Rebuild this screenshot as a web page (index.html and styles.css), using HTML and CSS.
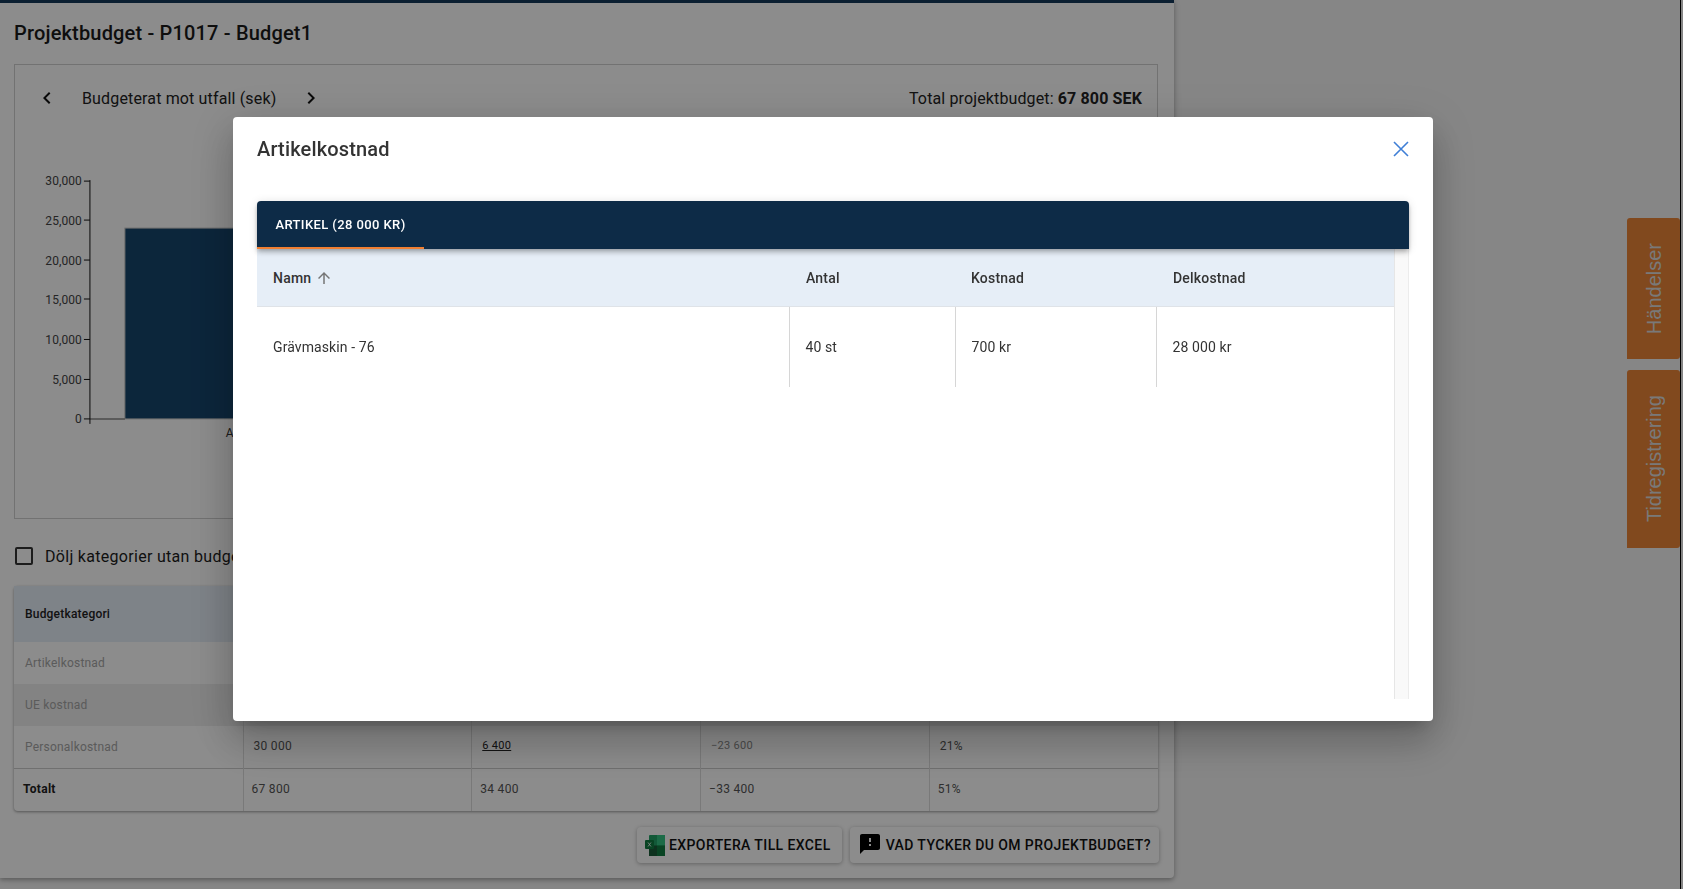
FILE: index.html
```html
<!DOCTYPE html>
<html lang="sv">
<head>
<meta charset="utf-8">
<title>Projektbudget</title>
<link rel="stylesheet" href="styles.css">
</head>
<body>
<div class="page">
  <main class="card">
    <h1 class="page-title">Projektbudget - P1017 - Budget1</h1>
    <section class="chart-box">
      <div class="chart-head">
        <div class="chart-nav">
          <svg class="chev" viewBox="0 0 24 24"><path d="M15.41 7.41 14 6l-6 6 6 6 1.41-1.41L10.83 12z"/></svg>
          <span class="chart-name">Budgeterat mot utfall (sek)</span>
          <svg class="chev chev-next" viewBox="0 0 24 24"><path d="M10 6 8.59 7.41 13.17 12l-4.58 4.59L10 18l6-6z"/></svg>
        </div>
        <div class="chart-total">Total projektbudget: <b>67 800 SEK</b></div>
      </div>
      <svg class="chart" viewBox="0 0 1143 403">
        <rect class="bar" x="110" y="113" width="300" height="191"/>
        <line class="base" x1="75" y1="304" x2="110" y2="304"/>
        <path class="axis" d="M75 65V309M69 66H75M69 105H75M69 145H75M69 184H75M69 224.500H75M69 264.500H75M69 304H75"/>
        <g class="ticks">
          <text x="67" y="70">30,000</text>
          <text x="67" y="110">25,000</text>
          <text x="67" y="149.500">20,000</text>
          <text x="67" y="189">15,000</text>
          <text x="67" y="229">10,000</text>
          <text x="67" y="269">5,000</text>
          <text x="67" y="308.500">0</text>
        </g>
        <text class="xlabel" x="211" y="322">A</text>
      </svg>
    </section>
    <label class="hide-row">
      <span class="checkbox"></span>
      <span class="hide-text">Dölj kategorier utan budget</span>
    </label>
    <table class="budget">
      <thead>
        <tr><th class="first">Budgetkategori</th><th></th><th></th><th></th><th></th></tr>
      </thead>
      <tbody>
        <tr class="cat"><td class="muted">Artikelkostnad</td><td></td><td></td><td></td><td></td></tr>
        <tr class="cat alt"><td class="muted">UE kostnad</td><td></td><td></td><td></td><td></td></tr>
        <tr class="cat"><td class="muted">Personalkostnad</td><td class="lift">30 000</td><td class="lift link"><u>6 400</u></td><td class="neg lift">−23 600</td><td class="lift">21%</td></tr>
        <tr class="total"><td><b>Totalt</b></td><td>67 800</td><td>34 400</td><td>−33 400</td><td>51%</td></tr>
      </tbody>
    </table>
    <div class="actions">
      <button class="btn btn-xl">
        <svg class="ico-xl" viewBox="0 0 20 23">
          <rect x="4" y="1" width="16" height="21" rx="1" fill="#21a366"/>
          <rect x="12" y="1" width="8" height="10.500" fill="#33c481"/>
          <rect x="4" y="11.500" width="8" height="10.500" fill="#185c37"/>
          <rect x="12" y="11.500" width="8" height="10.500" fill="#107c41"/>
          <rect x="0" y="6" width="9" height="9" rx="1" fill="#107c41"/>
          <path d="M3 8.500 6 12.500M6 8.500 3 12.500" stroke="#fff" stroke-width=".8" fill="none"/>
        </svg>
        Exportera till Excel
      </button>
      <button class="btn btn-fb">
        <svg class="ico-fb" viewBox="2 2 20 20"><path d="M20 2H4c-1.100 0-1.990.9-1.990 2L2 22l4-4h14c1.100 0 2-.9 2-2V4c0-1.100-.9-2-2-2zm-7 12h-2v-2h2v2zm0-4h-2V6h2v4z"/></svg>
        Vad tycker du om projektbudget?
      </button>
    </div>
  </main>
  <aside class="side">
    <div class="side-tabs">
      <div class="side-tab tab-a"><span>Händelser</span></div>
      <div class="side-tab tab-b"><span>Tidregistrering</span></div>
    </div>
    <div class="side-edge"></div>
  </aside>
</div>
<div class="overlay"></div>
<div class="modal">
  <header class="modal-head">
    <h2 class="modal-title">Artikelkostnad</h2>
    <svg class="close" viewBox="0 0 16 16"><path d="M1 1 15 15M15 1 1 15"/></svg>
  </header>
  <nav class="tabbar"><div class="tab">Artikel (28 000 kr)</div></nav>
  <div class="grid-wrap">
    <table class="items">
      <thead>
        <tr>
          <th class="c1"><span class="th-sort">Namn <svg class="sort" viewBox="0 0 24 24"><path d="M4 12l1.410 1.410L11 7.830V20h2V7.830l5.580 5.590L20 12l-8-8-8 8z"/></svg></span></th>
          <th class="c2">Antal</th>
          <th class="c3">Kostnad</th>
          <th class="c4">Delkostnad</th>
        </tr>
      </thead>
      <tbody>
        <tr><td>Grävmaskin - 76</td><td>40 st</td><td>700 kr</td><td>28 000 kr</td></tr>
      </tbody>
    </table>
    <div class="track"></div>
  </div>
</div>
</body>
</html>
```
FILE: styles.css
```css
* { box-sizing: border-box; }
html, body { margin: 0; height: 100%; overflow: hidden; }
body { background: #f5f5f5; font-family: Roboto, "Liberation Sans", sans-serif; color: #1a1a1a; }

.page { display: flex; justify-content: space-between; height: 889px; }

.card {
  width: 1174px; height: 878px; background: #fff;
  border-top: 3px solid #14395a; border-radius: 0 0 4px 0;
  padding: 0 16px 0 14px;
  box-shadow: 0 2px 4px rgba(0,0,0,.25), 0 1px 10px rgba(0,0,0,.12);
}
.page-title { margin: 0; height: 61px; padding-top: 16px; font-size: 20px; line-height: 28px; font-weight: 500; letter-spacing: .17px; }

.chart-box { height: 455px; border: 1px solid #cfcfcf; }
.chart-head { display: flex; justify-content: space-between; align-items: center; height: 34px; margin-top: 16px; padding: 0 15px 0 20px; }
.chart-nav { display: flex; align-items: center; }
.chev { width: 24px; height: 24px; fill: #111; }
.chart-name { margin-left: 23px; font-size: 16px; letter-spacing: .15px; color: #222; }
.chev-next { margin-left: 23px; }
.chart-total { font-size: 16px; letter-spacing: .13px; color: #222; }
.chart-total b { font-weight: 700; }
.chart { display: block; width: 1142px; height: 403px; }
.bar { fill: #16456c; stroke: #c8c8c8; stroke-width: 1; }
.base { stroke: #888; stroke-width: 1.500; }
.axis { stroke: #111; stroke-width: 1; fill: none; }
.ticks text { font-size: 12px; fill: #444; text-anchor: end; letter-spacing: .1px; }
.xlabel { font-size: 12px; fill: #333; }

.hide-row { display: flex; align-items: center; height: 67px; padding: 7px 0 0 1px; }
.checkbox { width: 18px; height: 18px; border: 2px solid #333; border-radius: 2px; }
.hide-text { margin-left: 12px; font-size: 16px; letter-spacing: .3px; color: #1c1c1c; }

table { border-collapse: collapse; table-layout: fixed; }
.budget { width: 1144px; border-radius: 4px; box-shadow: 0 1px 3px rgba(0,0,0,.4); font-size: 12px; letter-spacing: .3px; background: #fff; }
.budget th { height: 56px; background: #e6eef7; text-align: left; padding: 0 0 1px 11px; font-size: 12px; font-weight: 500; letter-spacing: .2px; color: #222; }
.budget .first { width: 229px; }
.budget td { padding: 0 0 0 10px; border-left: 1px solid #ddd; color: #555; }
.budget td:first-child { border-left: 0; padding-left: 11px; }
.cat td { height: 42px; }
.alt td { background: #eee; }
.budget .muted { color: #a6a6a6; letter-spacing: .2px; }
.budget .neg { color: #888; font-size: 11px; }
.budget .lift { padding-bottom: 2px; }
.budget .link { color: #222; font-size: 11px; }
.budget .total td { height: 43px; padding: 0 0 2px 8px; border-top: 1px solid #ccc; }
.total b { color: #222; margin-left: 1px; }

.actions { display: flex; justify-content: flex-end; gap: 8px; margin-top: 16px; margin-right: -1px; }
.btn {
  display: flex; align-items: center; height: 36px;
  background: #fff; border: 0; border-radius: 4px;
  box-shadow: 0 1px 4px rgba(0,0,0,.3);
  font: 500 14px Roboto, sans-serif; letter-spacing: .4px; text-transform: uppercase; color: #111;
}
.btn-xl { padding: 0 11px 0 8px; }
.btn-fb { padding: 0 8px 0 10px; }
.ico-xl { width: 20px; height: 23px; margin-right: 4px; }
.ico-fb { width: 20px; height: 20px; margin-right: 6px; margin-top: -2px; fill: #000; }

.side { display: flex; justify-content: flex-end; width: 60px; height: 889px; }
.side-tabs { display: flex; flex-direction: column; gap: 11px; padding-top: 218px; }
.side-tab { display: flex; align-items: center; justify-content: center; width: 53px; padding-left: 1px; background: #ec8637; border-radius: 3px 3px 3px 0; color: #ddd; font: 20px "Liberation Sans", Arial, sans-serif; }
.side-tab span { writing-mode: vertical-rl; transform: rotate(180deg); }
.tab-a { height: 141px; }
.tab-b { height: 178px; }
.side-edge { width: 3px; height: 100%; border-left: 1px solid #000; }

.overlay { position: fixed; inset: 0; background: rgba(0,0,0,.45); }

.modal {
  position: fixed; left: 233px; top: 117px; width: 1200px; height: 604px;
  background: #fff; border-radius: 4px; padding: 16px 24px 0;
  box-shadow: 0 11px 15px -7px rgba(0,0,0,.2), 0 24px 38px 3px rgba(0,0,0,.14), 0 9px 46px 8px rgba(0,0,0,.12);
}
.modal-head { display: flex; justify-content: space-between; align-items: center; height: 32px; margin-bottom: 36px; }
.modal-title { margin: 0; font-size: 20px; font-weight: 500; letter-spacing: .15px; color: #333; }
.close { width: 16px; height: 16px; margin-top: -1px; stroke: #3f7fd6; stroke-width: 1.600; fill: none; }

.tabbar { position: relative; height: 48px; background: #0d2b47; border-radius: 4px 4px 0 0; box-shadow: 0 2px 4px -1px rgba(0,0,0,.2), 0 4px 5px rgba(0,0,0,.14), 0 1px 10px rgba(0,0,0,.12); }
.tab { display: flex; align-items: center; justify-content: center; width: 167px; height: 48px; border-bottom: 2px solid #f07f32; color: #fff; font-size: 13px; font-weight: 500; letter-spacing: .4px; text-transform: uppercase; }

.grid-wrap { display: flex; justify-content: space-between; height: 450px; }
.items { width: 1137px; height: 138px; font-size: 14px; letter-spacing: .1px; color: #333; }
.items th { height: 57px; padding: 2px 0 0 17px; background: #e6eef7; border-bottom: 1px solid #dfe3e8; text-align: left; font-weight: 500; color: #333; letter-spacing: .2px; }
.items .c1 { width: 532px; padding-left: 16px; }
.items .c3 { width: 201px; padding-left: 16px; }
.c2 { width: 166px; } .c4 { width: 238px; }
.items td { height: 81px; padding: 1px 0 0 16px; border-left: 1px solid #d6d6d6; }
.items td:first-child { border-left: 0; }
.th-sort { display: inline-flex; align-items: center; gap: 4px; }
.sort { width: 18px; height: 18px; fill: #757575; }
.track { width: 15px; height: 100%; background: #f9f9f9; border-left: 1px solid #e6e6e6; border-right: 1px solid #ececec; }
```
